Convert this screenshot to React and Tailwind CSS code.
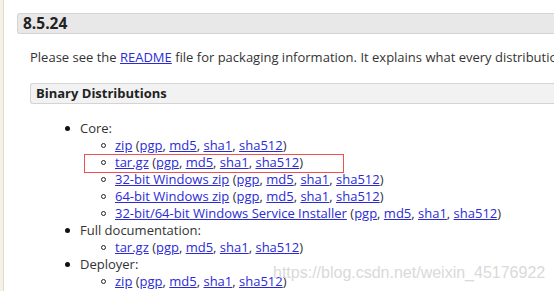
export default function App() {
  const L = ({ children }) => (
    <a href="#" className="text-[#2b2bd6] underline">{children}</a>
  );
  const Sigs = () => (
    <>
      {" ("}<L>pgp</L>, <L>md5</L>, <L>sha1</L>, <L>sha512</L>)
    </>
  );
  const Sub = ({ name, boxed }) => (
    <li className="flex items-center h-[17px] relative">
      {boxed && (
        <span className="absolute left-[-18px] top-[0px] w-[260px] h-[19px] border border-[#f25050] pointer-events-none"></span>
      )}
      <span className="w-[5px] h-[5px] rounded-full border border-[#222] mr-[9px] ml-[-1px]"></span>
      <span><L>{name}</L><Sigs /></span>
    </li>
  );
  const Top = ({ label }) => (
    <li className="flex items-center h-[17px]">
      <span className="w-[5px] h-[5px] rounded-full bg-[#111] mr-[10px] ml-[-1px]"></span>
      <span>{label}</span>
    </li>
  );
  return (
    <div className="relative w-[554px] h-[291px] overflow-hidden bg-white flex font-['Open_Sans',sans-serif] text-[13px] text-[#333] whitespace-nowrap">
      <div className="w-[4px] shrink-0 bg-[#f6f1e7] border-r border-[#e2dccf]"></div>
      <div className="flex-1 min-w-0 pt-[13px] pl-[13px]">
        <div className="h-[21px] bg-[#e8e8e8] border border-[#d4d4d4] rounded-l-[3px] border-r-0 flex items-center pl-[5px] font-bold text-[15.5px] text-[#222]">8.5.24</div>
        <div className="pl-[13px] mt-[15px] leading-[17px]">
          Please see the <L>README</L> file for packaging information. It explains what every distribution contains.
        </div>
        <div className="ml-[13px] mt-[17px] h-[21px] bg-[#f2f2f2] border border-[#d4d4d4] border-r-0 rounded-l-[3px] flex items-center pl-[5px] font-bold text-[13px] text-[#222]">Binary Distributions</div>
        <ul className="ml-[49px] mt-[16px]">
          <Top label="Core:" />
          <li>
            <ul className="ml-[36px]">
              <Sub name="zip" />
              <Sub name="tar.gz" boxed />
              <Sub name="32-bit Windows zip" />
              <Sub name="64-bit Windows zip" />
              <Sub name="32-bit/64-bit Windows Service Installer" />
            </ul>
          </li>
          <Top label="Full documentation:" />
          <li>
            <ul className="ml-[36px]">
              <Sub name="tar.gz" />
            </ul>
          </li>
          <Top label="Deployer:" />
          <li>
            <ul className="ml-[36px]">
              <Sub name="zip" />
            </ul>
          </li>
        </ul>
      </div>
      <div className="absolute left-[273px] top-[264px] leading-[18px] font-['Liberation_Sans',sans-serif] text-[16px] text-[#d6d6d6] opacity-90 pointer-events-none">https://blog.csdn.net/weixin_45176922</div>
    </div>
  );
}
